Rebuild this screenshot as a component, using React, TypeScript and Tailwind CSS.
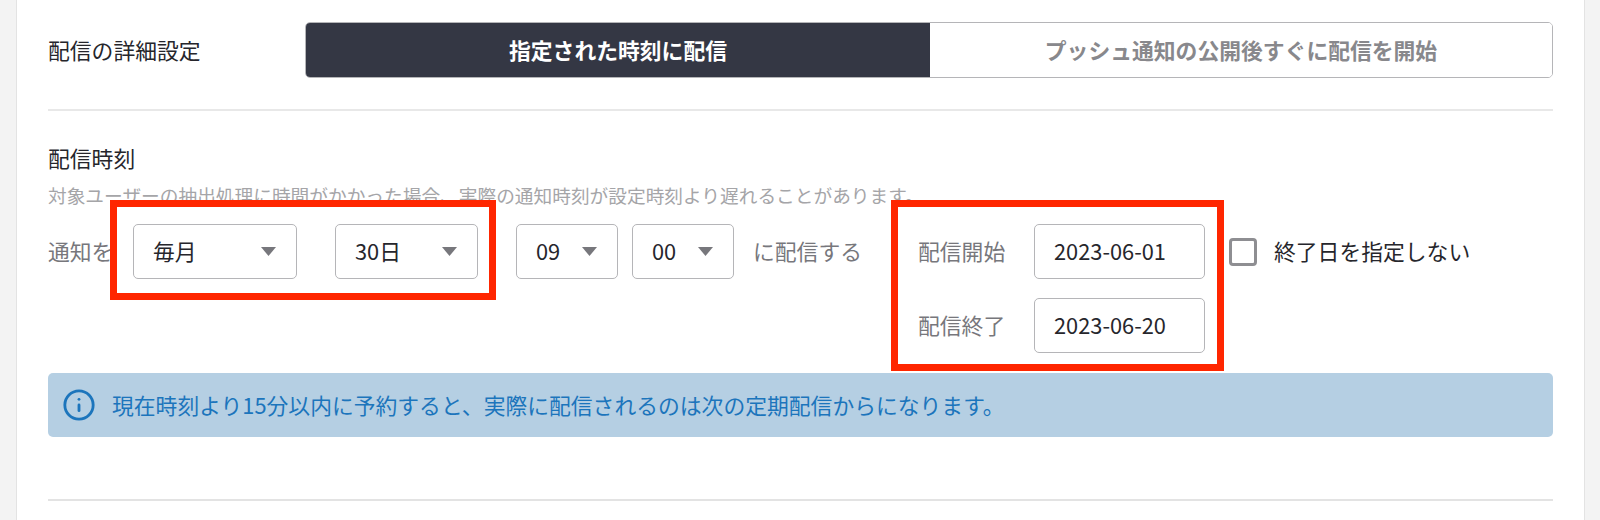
import { Info } from "lucide-react";

const jp = "font-['Noto_Sans_CJK_JP','Noto_Sans',sans-serif]";

function Select({ label, width }: { label: string; width: string }) {
  return (
    <div
      className={`${width} h-[55px] flex items-center justify-between pl-[19px] pr-5 bg-white border border-[#b5b5b8] rounded-[5px] text-[#26262c] text-[21.8px]`}
    >
      <span>{label}</span>
      {/* arrow */}
      <svg width="15" height="9" viewBox="0 0 15 9">
        <polygon points="0,0 15,0 7.5,9" fill="#77777c" />
      </svg>
    </div>
  );
}

function DateRow({ label, value }: { label: string; value: string }) {
  return (
    <div className="flex items-center">
      <span className="w-[116px] text-[#77777c] text-[21.8px]">{label}</span>
      <div className="w-[171px] h-[55px] flex items-center pl-[19px] bg-white border border-[#b5b5b8] rounded-[5px] text-[#26262c] text-[21.8px]">
        {value}
      </div>
    </div>
  );
}

export default function App() {
  return (
    <div className={`${jp} w-[1600px] h-[520px] overflow-hidden bg-[#f3f3f3]`}>
      <div className="relative ml-[16px] w-[1569px] h-[520px] bg-white border-x border-[#e3e3e3] px-[31px] pt-[22px]">
        {/* delivery mode */}
        <div className="flex items-center">
          <div className="w-[257px] text-[21.8px] text-[#26262c]">配信の詳細設定</div>
          <div className="w-[1248px] h-[56px] flex border border-[#b5b5b8] rounded-[5px] overflow-hidden text-[21.8px] font-bold">
            <div className="w-[624px] bg-[#343744] text-white flex items-center justify-center">
              指定された時刻に配信
            </div>
            <div className="flex-1 bg-white text-[#88888c] flex items-center justify-center">
              プッシュ通知の公開後すぐに配信を開始
            </div>
          </div>
        </div>

        <div className="mt-[31px] border-t-2 border-[#e8e8e8]" />

        <div className="mt-[32px] text-[21.8px] leading-[30px] text-[#26262c]">配信時刻</div>
        <div className="mt-[9px] text-[18.7px] leading-[26px] text-[#a5a5a8]">
          対象ユーザーの抽出処理に時間がかかった場合、実際の通知時刻が設定時刻より遅れることがあります。
        </div>

        <div className="mt-[16px] flex items-start">
          <div className="w-[85px] h-[55px] flex items-center text-[#77777c] text-[21.8px]">通知を</div>
          <Select label="毎月" width="w-[164px]" />
          <div className="w-[38px]" />
          <Select label="30日" width="w-[143px]" />
          <div className="w-[38px]" />
          <Select label="09" width="w-[102px]" />
          <div className="w-[14px]" />
          <Select label="00" width="w-[102px]" />
          <div className="ml-[19px] w-[165px] h-[55px] flex items-center text-[#77777c] text-[21.8px]">に配信する</div>
          <div className="flex flex-col gap-[19px]">
            <DateRow label="配信開始" value="2023-06-01" />
            <DateRow label="配信終了" value="2023-06-20" />
          </div>
          <div className="ml-[24px] h-[55px] flex items-center">
            <span className="w-[28px] h-[28px] border-[3px] border-[#8e8e92] rounded-[4px]" />
            <span className="ml-[17px] text-[21.8px] text-[#26262c]">終了日を指定しない</span>
          </div>
        </div>

        <div className="mt-[20px] h-[64px] flex items-center pl-[14px] bg-[#b5cfe3] rounded-[5px] text-[#1c75bc] text-[21.8px]">
          <Info size={34} strokeWidth={2} className="mr-[16px]" />
          <span>現在時刻より15分以内に予約すると、実際に配信されるのは次の定期配信からになります。</span>
        </div>

        <div className="mt-[62px] border-t-2 border-[#e3e3e3]" />

        {/* red highlight frames */}
        <div className="absolute left-[93px] top-[200px] w-[386px] h-[100px] border-[7px] border-[#ff2600]" />
        <div className="absolute left-[874px] top-[200px] w-[333px] h-[171px] border-[7px] border-[#ff2600]" />
      </div>
    </div>
  );
}
